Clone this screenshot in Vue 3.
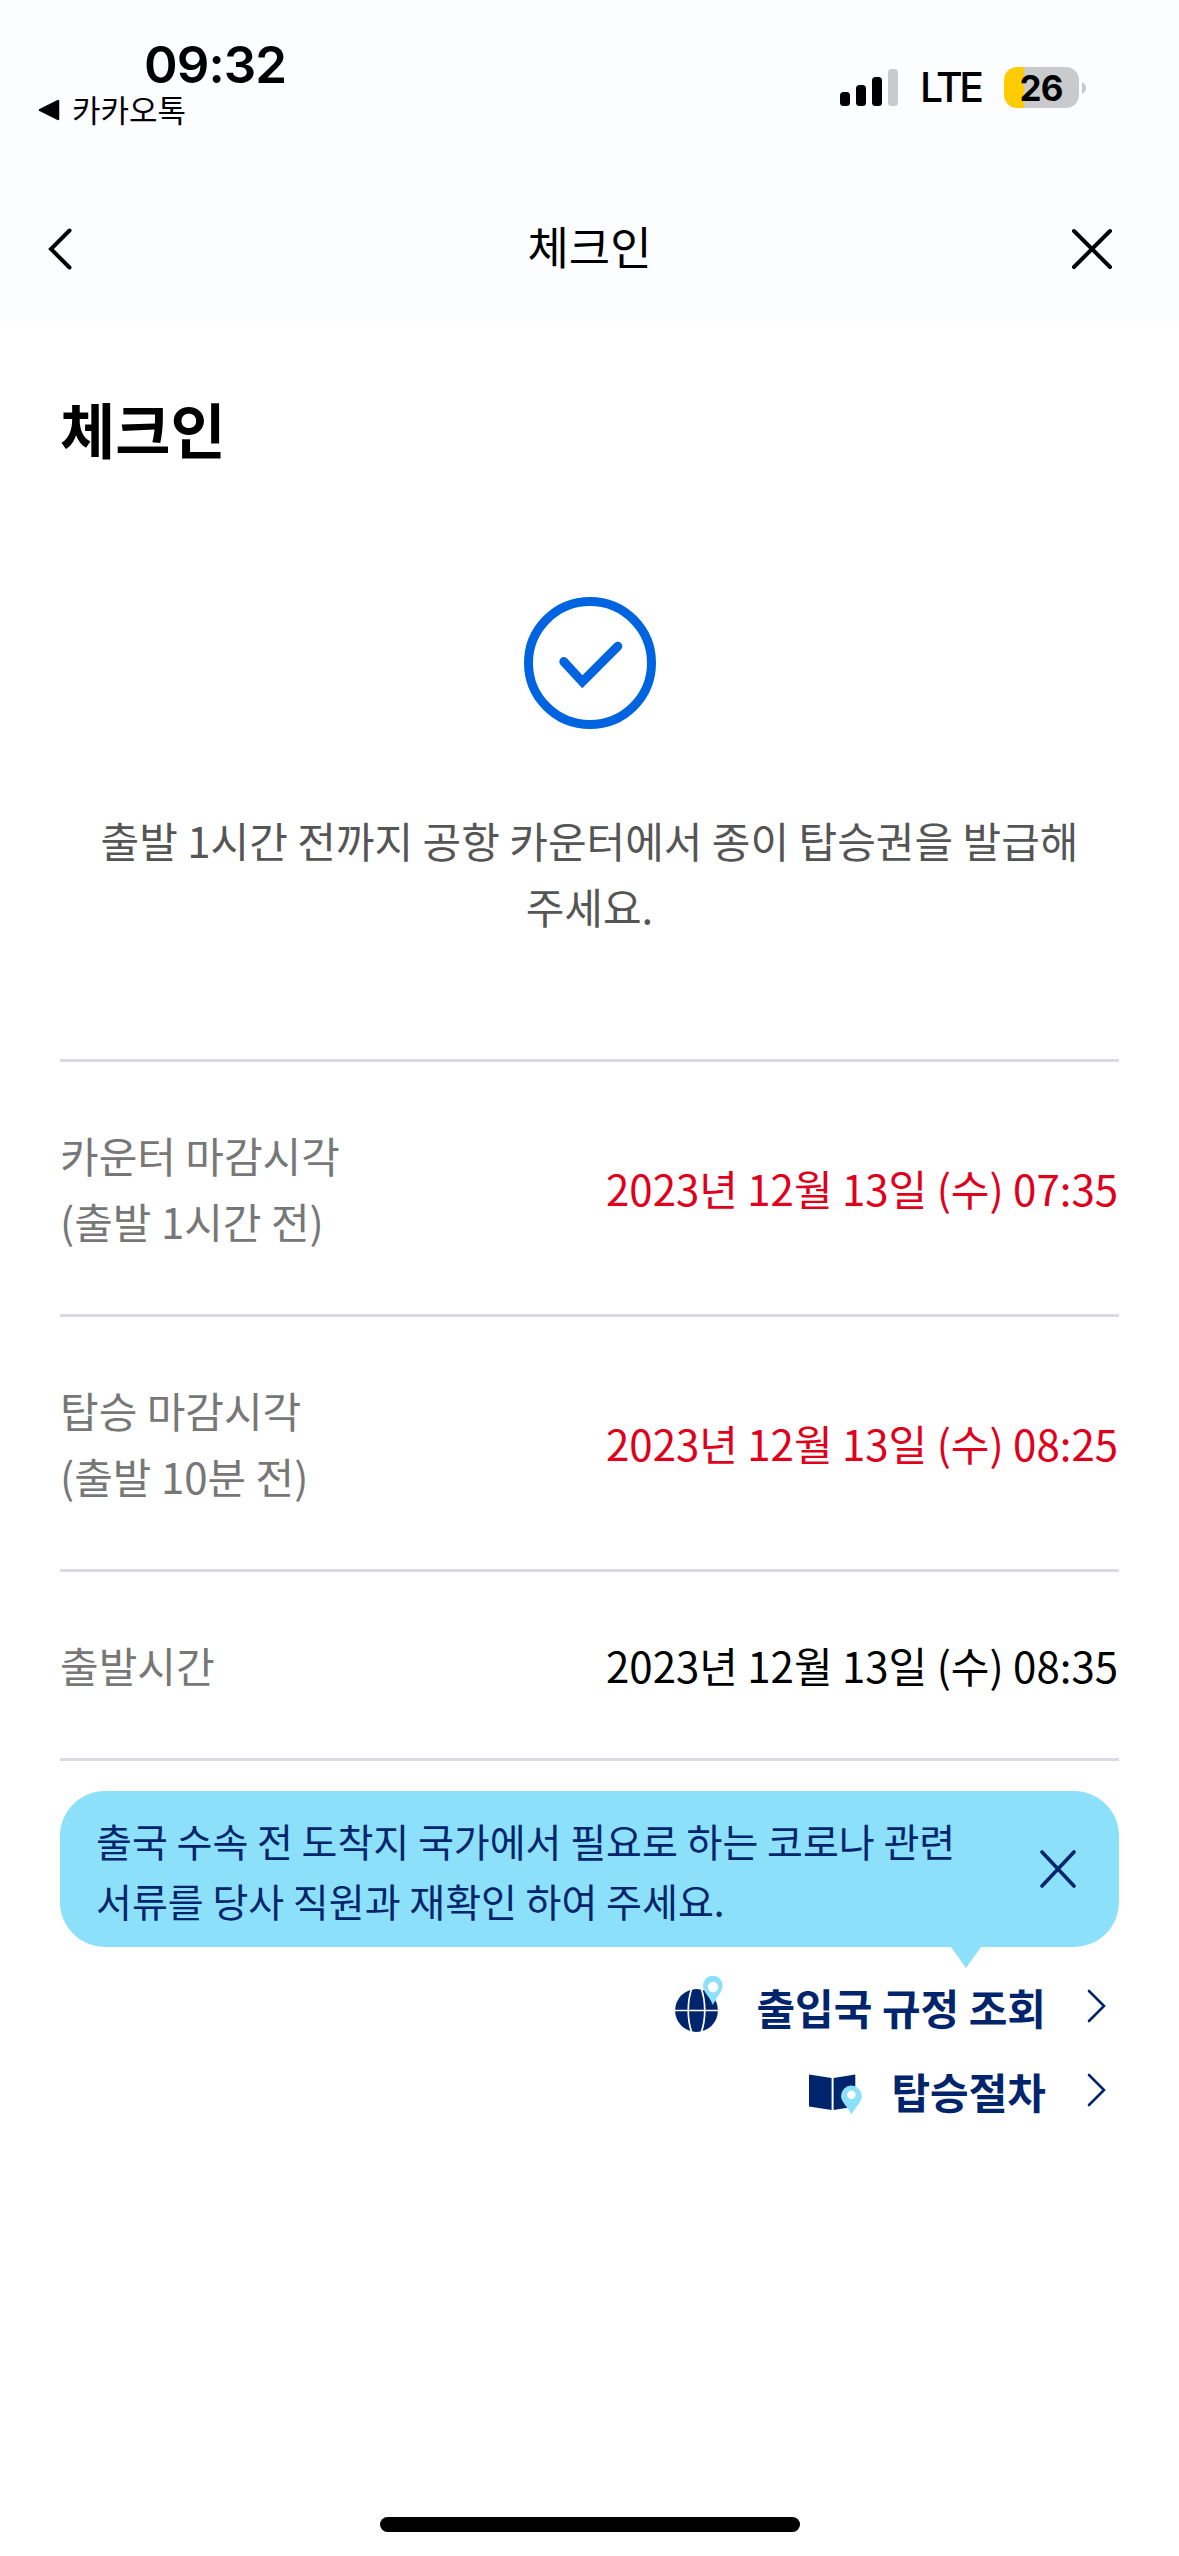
<script setup>
const rows = [
  { label: ['카운터 마감시각', '(출발 1시간 전)'], value: '2023년 12월 13일 (수) 07:35', alert: true },
  { label: ['탑승 마감시각', '(출발 10분 전)'], value: '2023년 12월 13일 (수) 08:25', alert: true },
  { label: ['출발시간'], value: '2023년 12월 13일 (수) 08:35', alert: false },
]
const bars = [14, 21, 29, 37]
</script>

<template>
  <div class="screen">
    <header class="top">
      <div class="status">
        <div class="status-left">
          <div class="time">09:32</div>
          <div class="back-app">
            <svg width="22" height="22" viewBox="0 0 22 22"><path d="M2 11 20 2V20Z" stroke="#000" stroke-width="2.5" stroke-linejoin="round" /></svg>
            <span>카카오톡</span>
          </div>
        </div>
        <div class="status-right">
          <div class="signal">
            <i v-for="(h, n) in bars" :key="n" :class="{ off: n === 3 }" :style="{ height: h + 'px' }"></i>
          </div>
          <span class="net">LTE</span>
          <div class="battery"><span>26</span></div>
          <svg class="nub" width="4" height="12" viewBox="0 0 4 12"><path d="M0 0Q4 2 4 6T0 12Z" fill="#c9cacc" /></svg>
        </div>
      </div>
      <nav class="nav">
        <svg class="nav-back" width="24" height="42" viewBox="0 0 24 42"><path d="M21.5 2.5 3 21 21.5 39.5" fill="none" stroke="#000" stroke-width="4" stroke-linecap="round" /></svg>
        <span class="nav-title">체크인</span>
        <svg class="nav-close" width="42" height="42" viewBox="0 0 42 42"><path d="M3 3 39 39M39 3 3 39" fill="none" stroke="#000" stroke-width="4" stroke-linecap="round" /></svg>
      </nav>
    </header>

    <main>
      <h1>체크인</h1>
      <svg class="done" width="132" height="132" viewBox="0 0 132 132" fill="none" stroke="#0064e1" stroke-width="9">
        <circle cx="66" cy="66" r="61.5" />
        <path d="M39.8 64.6 58.4 84.8 93.8 49.3" stroke-linecap="round" />
      </svg>
      <p class="message">출발 1시간 전까지 공항 카운터에서 종이 탑승권을 발급해<br />주세요.</p>

      <dl>
        <div v-for="row in rows" :key="row.value" class="row">
          <dt><span v-for="line in row.label" :key="line">{{ line }}</span></dt>
          <dd :class="{ alert: row.alert }">{{ row.value }}</dd>
        </div>
      </dl>

      <div class="tip">
        <p>출국 수속 전 도착지 국가에서 필요로 하는 코로나 관련<br />서류를 당사 직원과 재확인 하여 주세요.</p>
        <svg width="38" height="38" viewBox="0 0 38 38"><path d="M3 2 35 36M35 2 3 36" fill="none" stroke="#00256c" stroke-width="3.6" stroke-linecap="round" /></svg>
      </div>

      <div class="links">
        <a>
          <svg class="globe" width="48" height="56" viewBox="0 0 48 56">
            <circle cx="21.5" cy="34.5" r="21.4" fill="#00256c" />
            <path d="M0 34.5H43M17 12C12 25 12 44 17 57M26 12C31 25 31 44 26 57" fill="none" stroke="#fff" stroke-width="1.7" />
            <path d="M38 29C35 21 28 16 28 9.5A9.8 9.8 0 0 1 47.6 9.5C47.6 16 41 21 38 29Z" fill="#8ce0f9" />
            <circle cx="38" cy="11" r="5.2" fill="#fff" />
          </svg>
          <span>출입국 규정 조회</span>
          <svg width="20" height="34" viewBox="0 0 20 34"><path d="M2 2 17 17 2 32" fill="none" stroke="#00256c" stroke-width="2.6" stroke-linecap="round" /></svg>
        </a>
        <a>
          <svg class="book" width="53" height="41" viewBox="0 0 53 41">
            <path d="M0 .5 22.6 4V36L0 32.5ZM24.6 4 46.3.5V32.5L24.6 36Z" fill="#00256c" />
            <path d="M42.5 40.5C39.5 34 32 28 32 22A10.4 10.4 0 0 1 52.8 22C52.8 28 46 34 42.5 40.5Z" fill="#8ce0f9" />
            <circle cx="42.4" cy="20.7" r="4.2" fill="#fff" />
          </svg>
          <span>탑승절차</span>
          <svg width="20" height="34" viewBox="0 0 20 34"><path d="M2 2 17 17 2 32" fill="none" stroke="#00256c" stroke-width="2.6" stroke-linecap="round" /></svg>
        </a>
      </div>
    </main>

    <div class="home"></div>
  </div>
</template>

<style>
body {
  margin: 0;
  background: #fff;
}
</style>

<style scoped>
.screen {
  display: flex;
  flex-direction: column;
  box-sizing: border-box;
  width: 1179px;
  height: 2556px;
  background: #fff;
  color: #000;
  font-family: 'Noto Sans CJK KR', sans-serif;
  overflow: hidden;
}
svg {
  display: block;
  flex: none;
}
.top {
  height: 321px;
  background: #fcfdff;
}
.status {
  display: flex;
  justify-content: space-between;
  height: 177px;
}
.status-left {
  padding: 40px 0 0 38px;
}
.time {
  margin-left: 106px;
  font: 600 51px/50px Inter, sans-serif;
  letter-spacing: -0.9px;
}
.back-app {
  display: flex;
  align-items: center;
  gap: 12px;
  height: 40px;
  font-size: 31px;
}
.back-app span {
  height: 40px;
  line-height: 38px;
}
.status-right {
  display: flex;
  align-items: center;
  height: 41px;
  margin: 67px 93px 0 0;
}
.signal {
  display: flex;
  align-items: flex-end;
  gap: 6px;
  height: 37px;
}
.signal i {
  width: 10px;
  border-radius: 3.5px;
  background: #000;
}
.signal i.off {
  background: #c9cacc;
}
.net {
  width: 84px;
  margin-left: 22px;
  font: 500 41px/45px Inter, sans-serif;
  letter-spacing: -3.4px;
}
.battery {
  width: 75px;
  height: 41px;
  border-radius: 13px;
  background: linear-gradient(to right, #ffcc01 20px, #c9cacc 20px);
  font: 700 35px/42px Inter, sans-serif;
  letter-spacing: -1px;
  text-align: center;
}
.battery span {
  margin-right: 1px;
}
.nub {
  margin-left: 3px;
}
.nav {
  display: grid;
  grid-template-columns: 1fr auto 1fr;
  align-items: center;
  height: 144px;
}
.nav-back {
  margin-left: 48px;
}
.nav-close {
  justify-self: end;
  margin-right: 66px;
}
.nav-title {
  margin-bottom: 6px;
  font-size: 45px;
  line-height: 66px;
}
main {
  flex: 1;
  padding: 0 60px;
}
h1 {
  margin: 62px 0 0;
  font-size: 60px;
  font-weight: 700;
  line-height: 90px;
}
.done {
  margin: 124px auto 0 464px;
}
.message {
  margin: 78px 0 120px;
  color: #555;
  font-size: 42px;
  line-height: 66px;
  text-align: center;
  white-space: nowrap;
}
dl {
  margin: 0;
  border-top: 3px solid #dadae1;
}
.row {
  display: flex;
  align-items: center;
  justify-content: space-between;
  padding: 60px 0;
  border-bottom: 3px solid #dadae1;
  font-size: 42px;
  line-height: 66px;
}
dt {
  display: flex;
  flex-direction: column;
  color: #777;
}
dd {
  margin: 0 1px 0 0;
}
dd.alert {
  color: #e0001b;
}
.tip {
  position: relative;
  display: flex;
  align-items: center;
  justify-content: space-between;
  box-sizing: border-box;
  height: 156px;
  margin-top: 30px;
  padding: 0 42px 0 36px;
  border-radius: 45px;
  background: #8ce0f9;
  color: #00256c;
}
.tip p {
  margin: 1px 0 0;
  font-size: 39px;
  line-height: 60px;
  white-space: nowrap;
}
.tip::after {
  content: '';
  position: absolute;
  top: 100%;
  right: 138px;
  border: solid transparent;
  border-width: 21px 15px 0;
  border-top-color: #8ce0f9;
}
.links {
  display: flex;
  flex-direction: column;
  gap: 18px;
  margin-top: 26px;
  padding-right: 12px;
}
.links a {
  display: flex;
  align-items: center;
  justify-content: flex-end;
  height: 66px;
  color: #00256c;
  font-size: 42px;
  font-weight: 700;
  line-height: 66px;
}
.links span {
  margin: 1px 41px 0 33px;
}
.links .book + span {
  margin-left: 29px;
}
.globe {
  margin-bottom: 5px;
}
.book {
  margin-top: 8px;
}
.home {
  align-self: center;
  width: 420px;
  height: 15px;
  margin-bottom: 24px;
  border-radius: 8px;
  background: #000;
}
</style>
